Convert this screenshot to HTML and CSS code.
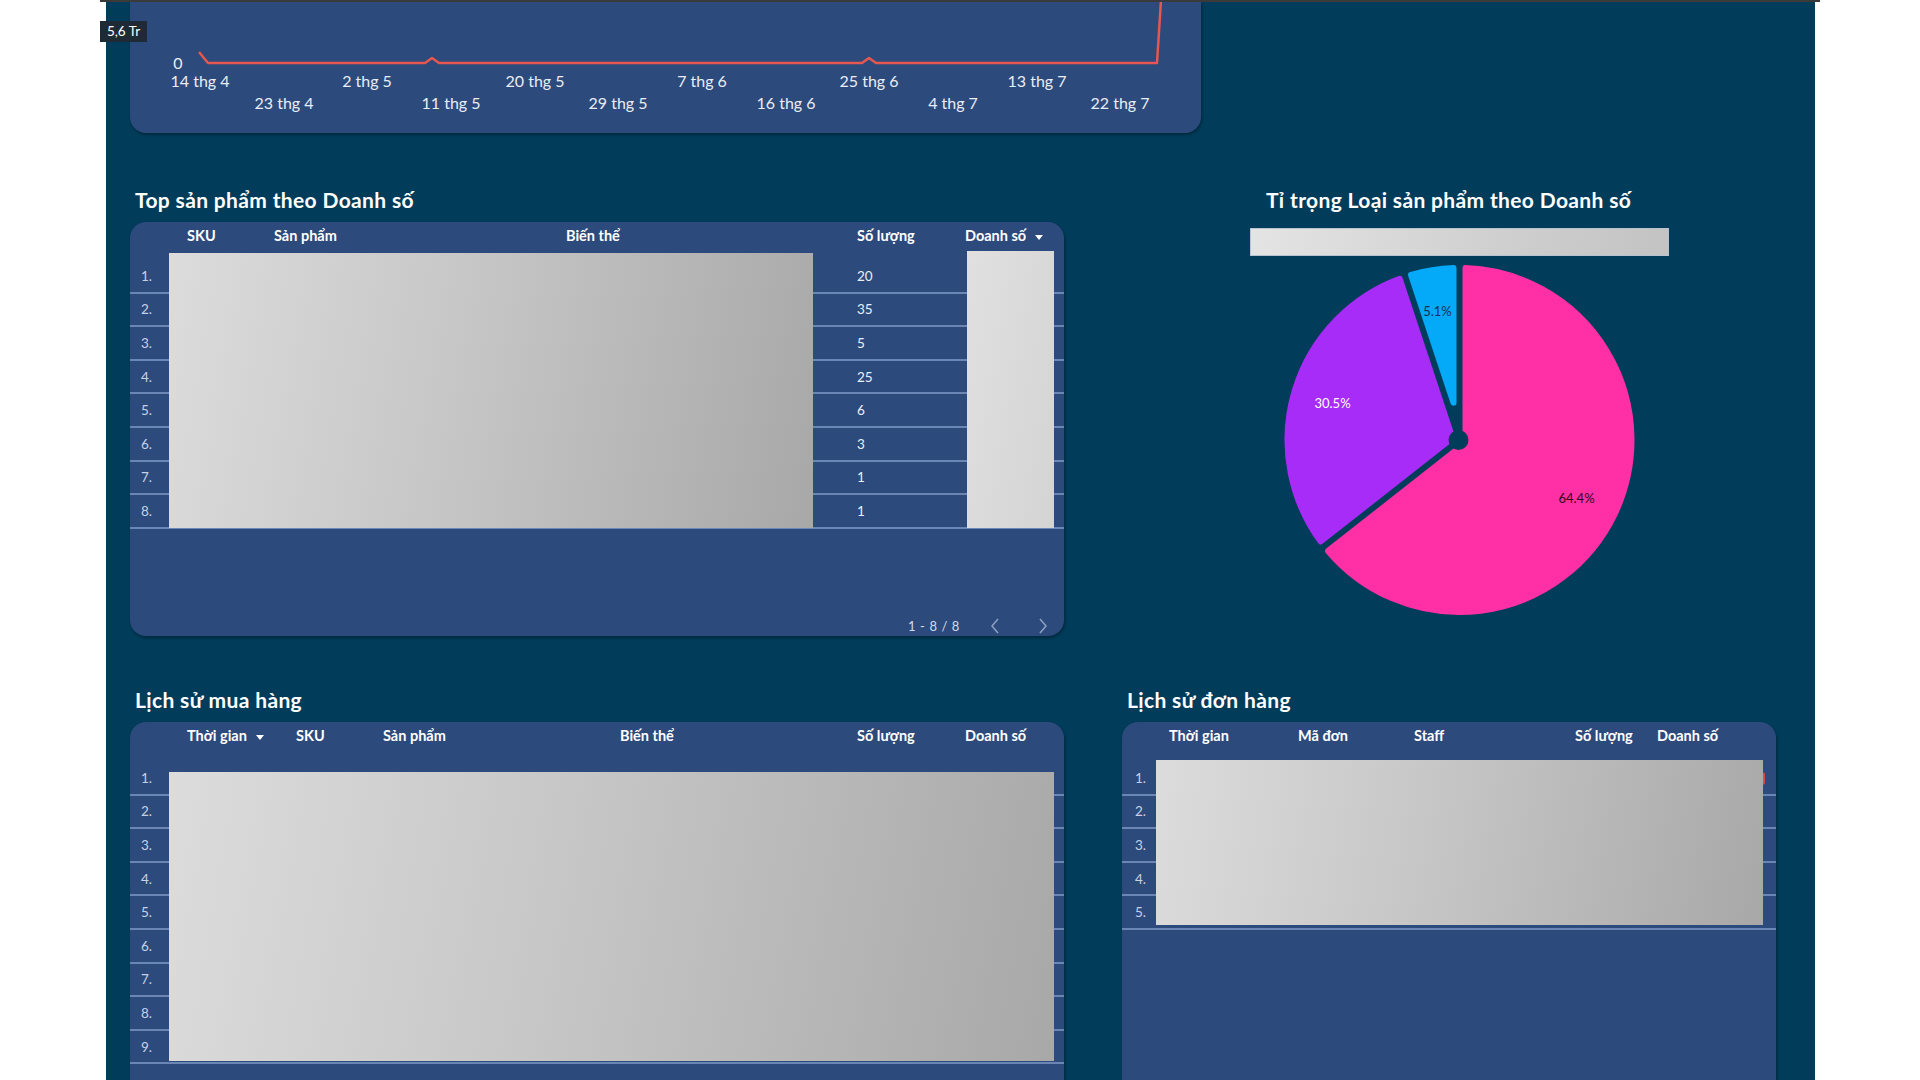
FILE: index.html
```html
<!DOCTYPE html>
<html lang="vi">
<head>
<meta charset="utf-8">
<title>Dashboard bán hàng</title>
<link rel="stylesheet" href="styles.css">
</head>
<body>
<div class="frame">
  <div class="tooltip">5,6 Tr</div>
  <main class="canvas">
    <section class="chart-card">
      <svg class="trend" viewBox="130 2 1071 131" width="1071" height="131">
        <polyline class="trend-line" points="199,52 208,63 425,63 432,58 439,63 862,63 869,58 876,63 1157,63 1161,0"/>
        <g class="axis">
          <text x="178" y="69">0</text>
          <text x="200" y="87">14 thg 4</text>
          <text x="284" y="109">23 thg 4</text>
          <text x="367" y="87">2 thg 5</text>
          <text x="451" y="109">11 thg 5</text>
          <text x="535" y="87">20 thg 5</text>
          <text x="618" y="109">29 thg 5</text>
          <text x="702" y="87">7 thg 6</text>
          <text x="786" y="109">16 thg 6</text>
          <text x="869" y="87">25 thg 6</text>
          <text x="953" y="109">4 thg 7</text>
          <text x="1037" y="87">13 thg 7</text>
          <text x="1120" y="109">22 thg 7</text>
        </g>
      </svg>
    </section>

    <div class="row row-top">
      <section class="panel panel-products">
        <h2 class="panel-title">Top sản phẩm theo Doanh số</h2>
        <div class="card table t-products">
          <div class="thead">
            <span></span>
            <span>SKU</span>
            <span>Sản phẩm</span>
            <span>Biến thể</span>
            <span>Số lượng</span>
            <span class="sort">Doanh số</span>
          </div>
          <div class="tbody">
            <div class="tr"><span class="num">1.</span><span class="qty">20</span></div>
            <div class="tr"><span class="num">2.</span><span class="qty">35</span></div>
            <div class="tr"><span class="num">3.</span><span class="qty">5</span></div>
            <div class="tr"><span class="num">4.</span><span class="qty">25</span></div>
            <div class="tr"><span class="num">5.</span><span class="qty">6</span></div>
            <div class="tr"><span class="num">6.</span><span class="qty">3</span></div>
            <div class="tr"><span class="num">7.</span><span class="qty">1</span></div>
            <div class="tr"><span class="num">8.</span><span class="qty">1</span></div>
            <div class="mask mask-products-main"></div>
            <div class="mask mask-light mask-products-rev"></div>
          </div>
          <div class="tfoot">
            <span class="pager-text">1 - 8 / 8</span>
            <svg class="chev chev-prev" width="10" height="16" viewBox="0 0 10 16"><polyline points="8,1 2,8 8,15"/></svg>
            <svg class="chev" width="10" height="16" viewBox="0 0 10 16"><polyline points="2,1 8,8 2,15"/></svg>
          </div>
        </div>
      </section>

      <section class="panel panel-pie">
        <h2 class="panel-title">Tỉ trọng Loại sản phẩm theo Doanh số</h2>
        <div class="legend-bar"></div>
        <svg class="pie" width="419" height="360" viewBox="-209.5 -180 419 360">
          <path class="slice pink" d="M6,2.9 L6,-171.9 A172,172 0 1 1 -131.44,110.95 Z"/>
          <path class="slice purple" d="M-7.02,-2.11 L-138.85,101.51 A172,172 0 0 1 -59.84,-161.26 Z"/>
          <path class="slice blue" d="M-6,-37.13 L-48.45,-165.04 A172,172 0 0 1 -6,-171.9 Z"/>
          <circle class="hub" cx="-1" cy="0" r="10"/>
          <text class="lbl lbl-blue" x="-22" y="-124.5">5.1%</text>
          <text class="lbl lbl-purple" x="-127" y="-32.5">30.5%</text>
          <text class="lbl lbl-pink" x="117" y="62.5">64.4%</text>
        </svg>
      </section>
    </div>

    <div class="row row-bottom">
      <section class="panel panel-purchases">
        <h2 class="panel-title">Lịch sử mua hàng</h2>
        <div class="card table t-purchases">
          <div class="thead">
            <span></span>
            <span class="sort">Thời gian</span>
            <span>SKU</span>
            <span>Sản phẩm</span>
            <span>Biến thể</span>
            <span>Số lượng</span>
            <span>Doanh số</span>
          </div>
          <div class="tbody">
            <div class="tr"><span class="num">1.</span></div>
            <div class="tr"><span class="num">2.</span></div>
            <div class="tr"><span class="num">3.</span></div>
            <div class="tr"><span class="num">4.</span></div>
            <div class="tr"><span class="num">5.</span></div>
            <div class="tr"><span class="num">6.</span></div>
            <div class="tr"><span class="num">7.</span></div>
            <div class="tr"><span class="num">8.</span></div>
            <div class="tr"><span class="num">9.</span></div>
            <div class="mask mask-purchases"></div>
          </div>
        </div>
      </section>

      <section class="panel panel-orders">
        <h2 class="panel-title">Lịch sử đơn hàng</h2>
        <div class="card table t-orders">
          <div class="thead">
            <span></span>
            <span>Thời gian</span>
            <span>Mã đơn</span>
            <span>Staff</span>
            <span>Số lượng</span>
            <span>Doanh số</span>
          </div>
          <div class="tbody">
            <div class="tr"><span class="num">1.</span></div>
            <div class="tr"><span class="num">2.</span></div>
            <div class="tr"><span class="num">3.</span></div>
            <div class="tr"><span class="num">4.</span></div>
            <div class="tr"><span class="num">5.</span></div>
            <div class="red-tick"></div>
            <div class="mask mask-orders"></div>
          </div>
        </div>
      </section>
    </div>
  </main>
</div>
</body>
</html>
```

FILE: styles.css
```css
* { box-sizing: border-box; }

html, body {
  margin: 0;
  padding: 0;
  background: #ffffff;
}

body {
  font-family: Lato, "Noto Sans", "DejaVu Sans", sans-serif;
  color: #ffffff;
  overflow: hidden;
}

.frame {
  position: relative;
  margin-left: 100px;
  width: 1720px;
  height: 1080px;
  border-top: 2px solid #3a3a3a;
}

.tooltip {
  position: absolute;
  left: 0;
  top: 19px;
  width: 47px;
  height: 21px;
  background: #1f2a37;
  color: #ffffff;
  font-size: 13.5px;
  line-height: 21px;
  text-align: center;
  z-index: 3;
}

.canvas {
  margin: 0 5px 0 6px;
  height: 1078px;
  background: #013c5a;
  padding-left: 24px;
  overflow: hidden;
}

/* trend chart */
.chart-card {
  width: 1071px;
  height: 131px;
  background: #2d4a7c;
  border-radius: 0 0 16px 16px;
  box-shadow: 1px 2px 3px rgba(0, 0, 0, 0.3);
}

.trend { display: block; }

.trend-line {
  fill: none;
  stroke: #e5574f;
  stroke-width: 2.5;
  stroke-linejoin: round;
}

.axis text {
  fill: #e8edf6;
  font-size: 16px;
  text-anchor: middle;
}

/* rows */
.row {
  display: flex;
  align-items: flex-start;
}

.row-top {
  margin-top: 55px;
  gap: 186px;
}

.row-bottom {
  margin-top: 52px;
  gap: 58px;
}

.panel-title {
  margin: 0 0 10px 5px;
  font-size: 21px;
  line-height: 24px;
  font-weight: 700;
  letter-spacing: 0.35px;
  color: #ffffff;
  white-space: nowrap;
}

.card {
  background: #2d4a7c;
  border-radius: 16px;
  box-shadow: 1px 2px 3px rgba(0, 0, 0, 0.3);
  display: flex;
  flex-direction: column;
}

/* tables */
.thead {
  display: grid;
  padding-top: 4px;
  font-size: 14.5px;
  line-height: 20px;
  font-weight: 700;
  color: #ffffff;
  white-space: nowrap;
}

.sort::after {
  content: "";
  display: inline-block;
  margin-left: 9px;
  vertical-align: middle;
  border-left: 4px solid transparent;
  border-right: 4px solid transparent;
  border-top: 5px solid #ffffff;
}

.tbody {
  position: relative;
}

.tr {
  display: grid;
  height: 33.6px;
  border-bottom: 2px solid #6b85b5;
  align-items: center;
  font-size: 13.5px;
  color: #eaf0f8;
}

.num {
  grid-column: 1;
  padding-left: 11px;
  color: #c7d1e5;
}

.mask {
  position: absolute;
  background: linear-gradient(100deg, #dcdcdc 0%, #c6c6c6 45%, #a8a8a8 100%);
}

.mask-light {
  background: linear-gradient(100deg, #e0e0e0 0%, #d4d4d4 100%);
}

/* table 1 */
.t-products {
  width: 934px;
  height: 414px;
}

.t-products .thead { height: 38px; }

.t-products .thead,
.t-products .tr {
  grid-template-columns: 57px 87px 292px 291px 108px 1fr;
}

.t-products .qty { grid-column: 5; }

.mask-products-main {
  left: 39px;
  top: -7px;
  width: 644px;
  height: 275px;
}

.mask-products-rev {
  left: 837px;
  top: -9px;
  width: 87px;
  height: 277px;
}

.tfoot {
  margin-top: auto;
  height: 20px;
  display: flex;
  justify-content: flex-end;
  align-items: center;
  padding-right: 16px;
}

.pager-text {
  font-size: 13px;
  letter-spacing: 0.6px;
  color: #d3dbea;
  margin-right: 30px;
}

.chev {
  display: block;
}

.chev-prev { margin-right: 38px; }

.chev polyline {
  fill: none;
  stroke: #8ea1c4;
  stroke-width: 1.5;
}

/* pie */
.panel-pie { width: 419px; }

.panel-pie .panel-title {
  margin-left: 16px;
  margin-bottom: 16px;
}

.legend-bar {
  height: 28px;
  background: linear-gradient(100deg, #e4e4e4 0%, #cfcfcf 60%, #c3c3c3 100%);
  border: 1px solid #b9c3cf;
}

.pie {
  display: block;
  margin-top: 4px;
}

.slice {
  stroke-width: 6;
  stroke-linejoin: round;
}

.pink { fill: #ff2fa6; stroke: #ff2fa6; }
.purple { fill: #a72cf7; stroke: #a72cf7; }
.blue { fill: #04a9f7; stroke: #04a9f7; }

.hub { fill: #013c5a; }

.lbl {
  font-size: 13px;
  text-anchor: middle;
}

.lbl-blue { fill: #17324d; }
.lbl-purple { fill: #ffffff; }
.lbl-pink { fill: #2a0c24; }

/* table 2 */
.t-purchases {
  width: 934px;
  height: 420px;
}

.t-purchases .thead { height: 40px; }

.t-purchases .thead,
.t-purchases .tr {
  grid-template-columns: 57px 109px 87px 237px 237px 108px 1fr;
}

.mask-purchases {
  left: 39px;
  top: 10px;
  width: 885px;
  height: 289px;
}

/* table 3 */
.t-orders {
  width: 654px;
  height: 420px;
}

.t-orders .thead { height: 40px; }

.t-orders .thead,
.t-orders .tr {
  grid-template-columns: 47px 129px 116px 161px 82px 1fr;
}

.t-orders .num { padding-left: 13px; }

.mask-orders {
  left: 34px;
  top: -2px;
  width: 607px;
  height: 165px;
}

.red-tick {
  position: absolute;
  left: 639px;
  top: 10px;
  width: 4px;
  height: 13px;
  border-radius: 0 3px 3px 0;
  background: #e0483f;
}
```
